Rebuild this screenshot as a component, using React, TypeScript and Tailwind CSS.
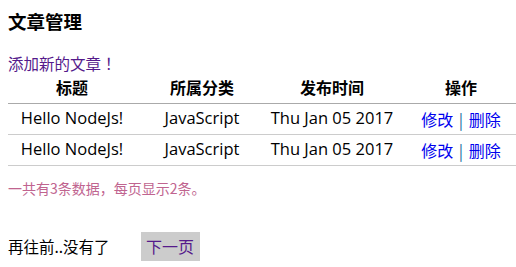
import React from "react";

interface Article {
  title: string;
  category: string;
  date: string;
}

const articles: Article[] = [
  { title: "Hello NodeJs!", category: "JavaScript", date: "Thu Jan 05 2017" },
  { title: "Hello NodeJs!", category: "JavaScript", date: "Thu Jan 05 2017" },
];

const cjk = { fontFamily: '"Noto Sans CJK SC", sans-serif' };

const App: React.FC = () => {
  return (
    <div
      className="w-[516px] h-[267px] overflow-hidden bg-white text-black px-2"
      style={{ fontFamily: '"Open Sans", "Noto Sans CJK SC", sans-serif' }}
    >
      <h3 className="text-[18.5px] font-bold leading-[24px] pt-[9px]" style={cjk}>
        文章管理
      </h3>
      <a
        href="#"
        className="block mt-[21px] text-[15.5px] leading-[18px] text-[#551a8b]"
        style={{ fontFamily: '"Noto Sans CJK JP", sans-serif' }}
      >
        添加新的文章！
      </a>
      <table className="w-[518px] border-collapse table-fixed">
        <colgroup>
          <col className="w-[128px]" />
          <col className="w-[132px]" />
          <col className="w-[128px]" />
          <col className="w-[130px]" />
        </colgroup>
        <thead>
          <tr className="h-[31px] border-b border-[#aaa] text-[16px]" style={cjk}>
            <th className="font-bold">标题</th>
            <th className="font-bold">所属分类</th>
            <th className="font-bold">发布时间</th>
            <th className="font-bold">操作</th>
          </tr>
        </thead>
        <tbody>
          {articles.map((a, i) => (
            <tr key={i} className="h-[31px] border-b border-[#ccc] text-[16.5px]">
              <td className="text-center">{a.title}</td>
              <td className="text-center">{a.category}</td>
              <td className="text-center">{a.date}</td>
              <td className="text-center text-[16px]" style={cjk}>
                <a href="#" className="text-[#0000ee]">修改</a>
                <span className="text-[#1a6e9e] px-[2px]"> | </span>
                <a href="#" className="text-[#0000ee]">删除</a>
              </td>
            </tr>
          ))}
        </tbody>
      </table>
      <p className="mt-[13px] text-[14px] leading-[18px] text-[#c0648f]" style={cjk}>
        一共有3条数据，每页显示2条。
      </p>
      <div className="flex items-center mt-[35px]" style={cjk}>
        <span className="text-[15.5px] leading-[20px]">再往前..没有了</span>
        <a
          href="#"
          className="ml-[31px] w-[59px] h-[29px] flex items-center justify-center bg-[#ccc] text-[16px] text-[#551a8b]"
        >
          下一页
        </a>
      </div>
    </div>
  );
};

export default App;
